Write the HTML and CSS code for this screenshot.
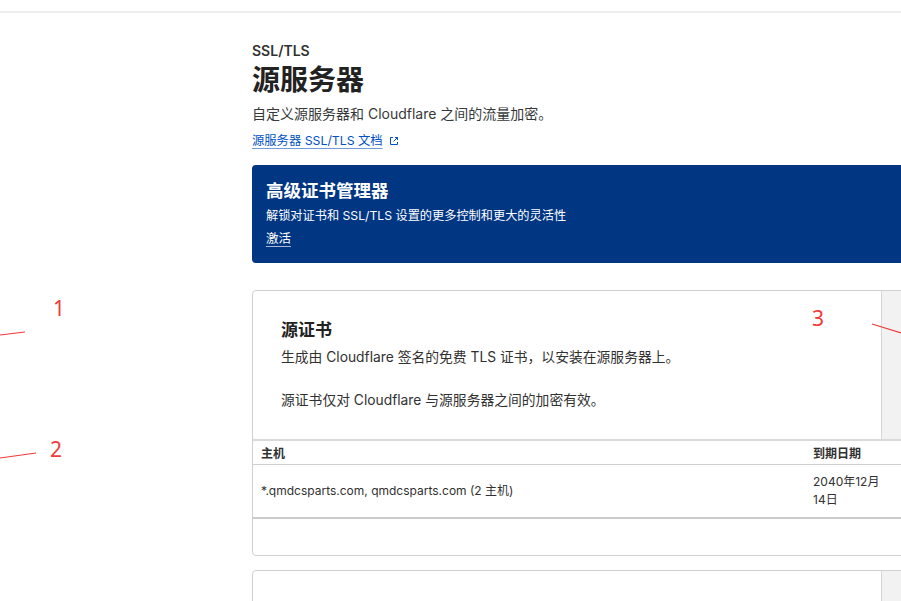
FILE: index.html
```html
<!DOCTYPE html>
<html lang="zh-CN">
<head>
<meta charset="utf-8">
<title>源服务器</title>
<link rel="stylesheet" href="styles.css">
</head>
<body>
<div class="topbar"></div>
<div class="layout">
  <aside class="side"></aside>
  <main class="main">
    <div class="eyebrow">SSL/TLS</div>
    <h1 class="title">源服务器</h1>
    <p class="subtitle">自定义源服务器和 Cloudflare 之间的流量加密。</p>
    <a class="doclink" href="#">源服务器 SSL/TLS 文档</a><svg class="ext" viewBox="0 0 10 10" width="10" height="10"><path d="M4 1.5H1.5v7h7V6" fill="none" stroke="#0051c3" stroke-width="1"/><path d="M6 1.5h2.5V4M8.5 1.5L4.5 5.5" fill="none" stroke="#0051c3" stroke-width="1"/></svg>

    <section class="banner">
      <div class="banner-title">高级证书管理器</div>
      <div class="banner-text">解锁对证书和 SSL/TLS 设置的更多控制和更大的灵活性</div>
      <a class="banner-link" href="#">激活</a>
    </section>

    <section class="card">
      <div class="card-top">
        <div class="card-body">
          <h2 class="card-title">源证书</h2>
          <p class="card-text">生成由 Cloudflare 签名的免费 TLS 证书，以安装在源服务器上。</p>
          <p class="card-text gap">源证书仅对 Cloudflare 与源服务器之间的加密有效。</p>
        </div>
        <div class="card-side"></div>
      </div>
      <div class="table">
        <div class="trow thead">
          <div class="c1">主机</div>
          <div class="c2">到期日期</div>
        </div>
        <div class="trow tbody">
          <div class="c1">*.qmdcsparts.com, qmdcsparts.com (2 主机)</div>
          <div class="c2">2040年12月<br>14日</div>
        </div>
      </div>
      <div class="card-foot"></div>
    </section>

    <section class="card card2">
      <div class="card-top">
        <div class="card-body"></div>
        <div class="card-side"></div>
      </div>
    </section>
  </main>
</div>

<div class="mark m1">1</div>
<div class="mark m2">2</div>
<div class="mark m3">3</div>
<svg class="lines" width="901" height="601" viewBox="0 0 901 601">
  <path d="M0 335 L25 332" stroke="#f23a3a" stroke-width="1.2" fill="none"/>
  <path d="M0 458 L36 453" stroke="#f23a3a" stroke-width="1.2" fill="none"/>
  <path d="M872 324 L901 333" stroke="#f23a3a" stroke-width="1.2" fill="none"/>
</svg>
</body>
</html>
```

FILE: styles.css
```css
* { box-sizing: border-box; }
html, body { margin: 0; padding: 0; }
body {
  width: 901px;
  height: 601px;
  overflow: hidden;
  background: #fff;
  font-family: Inter, "Noto Sans CJK SC", sans-serif;
  color: #313131;
  position: relative;
}
.topbar {
  height: 13px;
  border-bottom: 2px solid #eeeeee;
}
.layout {
  display: flex;
  width: 1000px;
}
.side { width: 252px; flex: none; }
.main {
  width: 720px;
  flex: none;
  padding-top: 29px;
}
.eyebrow {
  font-size: 14px;
  font-weight: 600;
  line-height: 18px;
  color: #313131;
}
.title {
  margin: 2px 0 0;
  font-size: 28px;
  font-weight: 700;
  line-height: 36px;
  color: #222;
}
.subtitle {
  margin: 6px 0 0;
  font-size: 14px;
  line-height: 20px;
  color: #36393a;
}
.doclink {
  display: inline-block;
  margin-top: 8px;
  font-size: 12.3px;
  line-height: 18px;
  color: #0051c3;
  text-decoration: underline;
  text-underline-offset: 3px;
  text-decoration-color: #6f9ddc;
}
.ext { margin-left: 6px; vertical-align: -1px; }
.banner {
  margin-top: 15px;
  height: 98px;
  background: #003682;
  border-radius: 4px;
  padding: 15px 14px 0;
  color: #fff;
}
.banner-title {
  font-size: 17.5px;
  font-weight: 700;
  line-height: 22px;
}
.banner-text {
  margin-top: 5px;
  font-size: 12.2px;
  line-height: 18px;
}
.banner-link {
  display: inline-block;
  margin-top: 5px;
  font-size: 12.5px;
  line-height: 18px;
  color: #fff;
  text-decoration: underline;
  text-underline-offset: 3px;
  text-decoration-color: #a8b8d6;
}
.card {
  margin-top: 27px;
  border: 1px solid #d0d0d0;
  border-radius: 4px;
  overflow: hidden;
}
.card-top {
  display: flex;
  height: 148px;
}
.card-body {
  flex: 1;
  padding: 27px 28px 0;
}
.card-side {
  width: 90px;
  flex: none;
  background: #f2f2f2;
  border-left: 1px solid #d6d6d6;
}
.card-title {
  margin: 0;
  font-size: 17px;
  font-weight: 700;
  line-height: 24px;
  color: #222;
}
.card-text {
  margin: 5px 0 0;
  font-size: 13.8px;
  line-height: 20px;
  color: #313131;
}
.card-text.gap { margin-top: 23px; }
.table {
  border-top: 2px solid #d9d9d9;
}
.trow {
  display: flex;
  font-size: 12px;
  color: #313131;
}
.thead {
  height: 24px;
  align-items: center;
  font-weight: 700;
  border-bottom: 1px solid #cfcfcf;
  background: #fff;
}
.tbody {
  height: 54px;
  align-items: center;
  line-height: 18px;
  border-bottom: 2px solid #cbcbcb;
}
.c1 { flex: 1; padding-left: 8px; }
.c2 { width: 158px; flex: none; }
.card-foot { height: 36px; }
.card2 { margin-top: 14px; }
.card2 .card-top { height: 80px; }
.mark {
  position: absolute;
  font-family: "Noto Sans", "DejaVu Sans", sans-serif;
  font-size: 21px;
  font-weight: 400;
  color: #f23a3a;
  line-height: 24px;
}
.m1 { left: 53px; top: 296px; }
.m2 { left: 50px; top: 437px; }
.m3 { left: 812px; top: 306px; }
.lines {
  position: absolute;
  left: 0;
  top: 0;
  pointer-events: none;
}
```
